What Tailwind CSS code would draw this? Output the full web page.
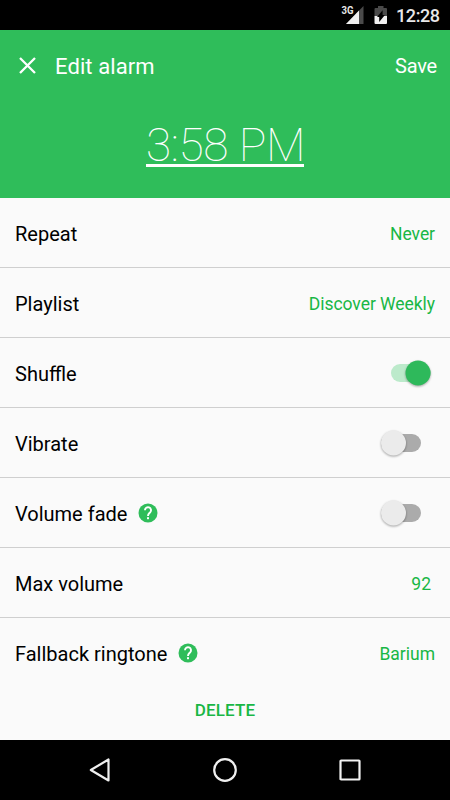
<!DOCTYPE html>
<html lang="en">
<head>
<meta charset="utf-8">
<title>Edit alarm</title>
<script src="https://cdn.jsdelivr.net/npm/@tailwindcss/browser@4"></script>
</head>
<body class="w-[450px] h-[800px] overflow-hidden bg-[#fafafa] font-[Roboto,sans-serif] text-black flex flex-col">
  <div class="h-[30px] shrink-0 bg-black flex items-center justify-end pr-[10px] text-[#e8e8e8]">
    <svg class="w-[24px] h-[30px]" viewBox="0 0 24 30">
      <path d="M23.500 6V24H6Z" fill="#4a4a4a"/><path d="M19 10.600V24H6Z" fill="#f0f0f0"/>
      <text x="1.500" y="14" font-size="11" font-weight="700" fill="#e8e8e8" textLength="12" lengthAdjust="spacingAndGlyphs">3G</text>
    </svg>
    <svg class="w-[14px] h-[30px] ml-[10px]" viewBox="0 0 14 30">
      <path d="M4 6h5.500v2H12q1 0 1 1v7H.500V9q0-1 1-1H4Z" fill="#4a4a4a"/>
      <path d="M.500 16H13v7q0 1-1 1H1.500q-1 0-1-1Z" fill="#f0f0f0"/>
      <path d="M8.600 10.200V15h2.300L5.200 22v-5H3Z" fill="#000"/>
    </svg>
    <span class="ml-[8px] w-[44px] pt-[2px] text-[18px] leading-[28px] font-medium whitespace-nowrap tracking-[-0.4px]">12:28</span>
  </div>
  <header class="h-[168px] shrink-0 bg-[#2fbd5a] text-white flex flex-col">
    <div class="h-[72px] flex items-center pl-[19px] pr-[13px]">
      <svg class="w-[17px] h-[19px]" viewBox="0 0 17 19"><path d="M1 1L16 16M16 1L1 16" stroke="#fff" stroke-width="2.300"/></svg>
      <h1 class="ml-[19px] pt-px text-[22px] leading-6 tracking-[0.1px]">Edit alarm</h1>
      <span class="ml-auto text-[20px] leading-6 tracking-[-0.2px]">Save</span>
    </div>
    <div class="flex justify-center">
      <div class="w-[158px] h-[65px] border-b-[3px] border-white text-[46px] leading-[86px] tracking-[-0.4px] font-thin whitespace-nowrap text-center">3:58 PM</div>
    </div>
  </header>
  <main class="flex-1 flex flex-col text-[20px] leading-6">
    <div class="h-[70px] border-b border-[#cfcfcf] px-[15px] flex items-center justify-between"><span class="pt-[2px]">Repeat</span><span class="pt-[2px] text-[17.500px] tracking-[-0.050px] text-[#18b745]">Never</span></div>
    <div class="h-[70px] border-b border-[#cfcfcf] px-[15px] flex items-center justify-between"><span class="pt-[2px]">Playlist</span><span class="pt-[2px] text-[17.500px] tracking-[-0.050px] text-[#18b745]">Discover Weekly</span></div>
    <div class="h-[70px] border-b border-[#cfcfcf] px-[15px] flex items-center justify-between"><span class="pt-[2px]">Shuffle</span>
      <svg class="w-[60px] h-[40px]" viewBox="375 353 60 40"><rect x="391" y="364" width="40" height="18" rx="9" fill="#bceacb"/><circle cx="418" cy="373" r="12.500" fill="#2eb95b" class="drop-shadow-[0_1px_1px_rgba(0,0,0,0.35)]"/></svg>
    </div>
    <div class="h-[70px] border-b border-[#cfcfcf] px-[15px] flex items-center justify-between"><span class="pt-[2px]">Vibrate</span>
      <svg class="w-[60px] h-[40px]" viewBox="375 353 60 40"><rect x="381" y="364" width="40" height="18" rx="9" fill="#ababab"/><circle cx="393.500" cy="373" r="12.500" fill="#ebebeb" class="drop-shadow-[0_1px_1px_rgba(0,0,0,0.35)]"/></svg>
    </div>
    <div class="h-[70px] border-b border-[#cfcfcf] px-[15px] flex items-center"><span class="pt-[2px]">Volume fade</span>
      <svg class="w-[20px] h-[20px] ml-[11px]" viewBox="0 0 20 20"><circle cx="10" cy="10" r="9.500" fill="#2fbd5a"/><path d="M7 7.300a3 3 0 1 1 5.200 2C11 10.600 10 11 10 13" fill="none" stroke="#fff" stroke-width="1.900"/><rect x="9" y="14.200" width="2" height="2" fill="#fff"/></svg>
      <svg class="w-[60px] h-[40px] ml-auto" viewBox="375 353 60 40"><rect x="381" y="364" width="40" height="18" rx="9" fill="#ababab"/><circle cx="393.500" cy="373" r="12.500" fill="#ebebeb" class="drop-shadow-[0_1px_1px_rgba(0,0,0,0.35)]"/></svg>
    </div>
    <div class="h-[70px] border-b border-[#cfcfcf] pl-[15px] pr-[19px] flex items-center justify-between"><span class="pt-[2px]">Max volume</span><span class="pt-[2px] text-[17.500px] text-[#18b745]">92</span></div>
    <div class="h-[70px] px-[15px] flex items-center"><span class="pt-px">Fallback ringtone</span>
      <svg class="w-[20px] h-[20px] ml-[11px]" viewBox="0 0 20 20"><circle cx="10" cy="10" r="9.500" fill="#2fbd5a"/><path d="M7 7.300a3 3 0 1 1 5.200 2C11 10.600 10 11 10 13" fill="none" stroke="#fff" stroke-width="1.900"/><rect x="9" y="14.200" width="2" height="2" fill="#fff"/></svg>
      <span class="ml-auto pt-px text-[17.500px] text-[#18b745]">Barium</span></div>
    <div class="h-[44px] flex items-center justify-center text-[17px] font-medium tracking-[0.15px] text-[#18b745]">DELETE</div>
  </main>
  <nav class="h-[60px] shrink-0 bg-black flex items-center justify-center gap-[101px]">
    <svg class="w-[24px] h-[26px]" viewBox="0 0 24 26"><path d="M20.500 2.500V23.500L2.800 13Z" fill="none" stroke="#f0f0f0" stroke-width="2.200" stroke-linejoin="round"/></svg>
    <svg class="w-[24px] h-[26px]" viewBox="0 0 24 26"><circle cx="12" cy="13" r="10.800" fill="none" stroke="#f0f0f0" stroke-width="2.200"/></svg>
    <svg class="w-[24px] h-[26px]" viewBox="0 0 24 26"><rect x="2.500" y="3.500" width="19" height="19" rx=".6" fill="none" stroke="#f0f0f0" stroke-width="2.200"/></svg>
  </nav>
</body>
</html>
